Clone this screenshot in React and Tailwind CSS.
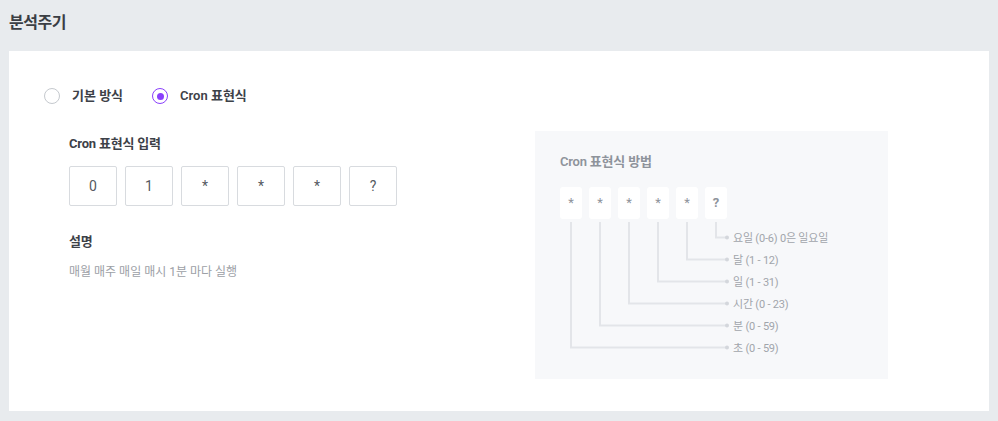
import React from "react";

const FONT = { fontFamily: "Roboto, 'Noto Sans CJK KR', sans-serif" };

function Radio({ checked, label }) {
  return (
    <label className="flex items-center">
      <span
        className={
          "flex h-4 w-4 items-center justify-center rounded-full border-[1.5px] bg-white " +
          (checked ? "border-[#8a3ffc]" : "border-[#c5c9ce]")
        }
      >
        {checked && <span className="h-[7px] w-[7px] rounded-full bg-[#8a3ffc]" />}
      </span>
      <span className="ml-[12px] text-[13px] font-semibold leading-[18px] text-[#3d4148]">{label}</span>
    </label>
  );
}

const inputs = ["0", "1", "*", "*", "*", "?"];
const boxes = ["*", "*", "*", "*", "*", "?"];
const labels = ["요일 (0-6) 0은 일요일", "달 (1 - 12)", "일 (1 - 31)", "시간 (0 - 23)", "분 (0 - 59)", "초 (0 - 59)"];

function Diagram() {
  const xs = [11, 40, 69, 98, 127, 156];
  const rowY = [50.5, 72.5, 94.5, 116.5, 138.5, 160.5];
  return (
    <div className="relative mt-[16px]">
      <div className="flex gap-[7px]">
        {boxes.map((b, i) => (
          <div
            key={i}
            className={
              "flex h-[32px] w-[22px] items-center justify-center rounded-[3px] bg-white text-[13px] text-[#8e939b] " +
              (b === "?" ? "font-bold" : "")
            }
          >
            {b}
          </div>
        ))}
      </div>
      <svg className="absolute left-0 top-0" width="190" height="175" viewBox="0 0 190 175">
        {xs.map((x, i) => {
          const y = rowY[5 - i];
          return (
            <g key={i}>
              <path d={`M${x} 35 V${y} H166`} fill="none" stroke="#e3e5e9" strokeWidth="2" />
              <circle cx="167" cy={y} r="2" fill="#d4d7dc" />
            </g>
          );
        })}
      </svg>
      <div className="ml-[173px] mt-[9px] flex flex-col">
        {labels.map((l, i) => (
          <div key={i} className="h-[22px] whitespace-nowrap text-[11px] leading-[22px] tracking-[-0.2px] text-[#a1a5ab]">
            {l}
          </div>
        ))}
      </div>
    </div>
  );
}

export default function App() {
  return (
    <div className="min-h-[421px] w-[998px] bg-[#e8ebee] px-[9px] pb-[10px]" style={FONT}>
      <div className="flex h-[51px] items-center pb-[6px]">
        <h1 className="text-[16px] font-semibold tracking-[-0.5px] text-[#3a3e44]">분석주기</h1>
      </div>
      <div className="h-[360px] bg-white pl-[35px] pt-[36px]">
        <div className="flex items-center">
          <Radio label="기본 방식" />
          <div className="ml-[29px]">
            <Radio checked label="Cron 표현식" />
          </div>
        </div>
        <div className="mt-[26px] flex">
          <div className="w-[491px] pl-[25px] pt-[4px]">
            <div className="text-[13px] font-bold leading-[18px] tracking-[-0.2px] text-[#3d4148]">Cron 표현식 입력</div>
            <div className="mt-[13px] flex gap-[8px]">
              {inputs.map((v, i) => (
                <div
                  key={i}
                  className="flex h-[40px] w-[48px] items-center justify-center rounded-[2px] border border-[#d8dbdf] text-[14px] text-[#555a61]"
                >
                  {v}
                </div>
              ))}
            </div>
            <div className="mt-[27px] text-[13px] font-bold leading-[18px] tracking-[-0.2px] text-[#3d4148]">설명</div>
            <div className="mt-[12px] text-[12px] leading-[18px] text-[#9ca0a6]">매월 매주 매일 매시 1분 마다 실행</div>
          </div>
          <div className="h-[248px] w-[353px] bg-[#f7f8fa] pl-[25px] pt-[22px]">
            <div className="text-[13px] font-semibold leading-[18px] tracking-[-0.2px] text-[#8e939b]">Cron 표현식 방법</div>
            <Diagram />
          </div>
        </div>
      </div>
    </div>
  );
}
